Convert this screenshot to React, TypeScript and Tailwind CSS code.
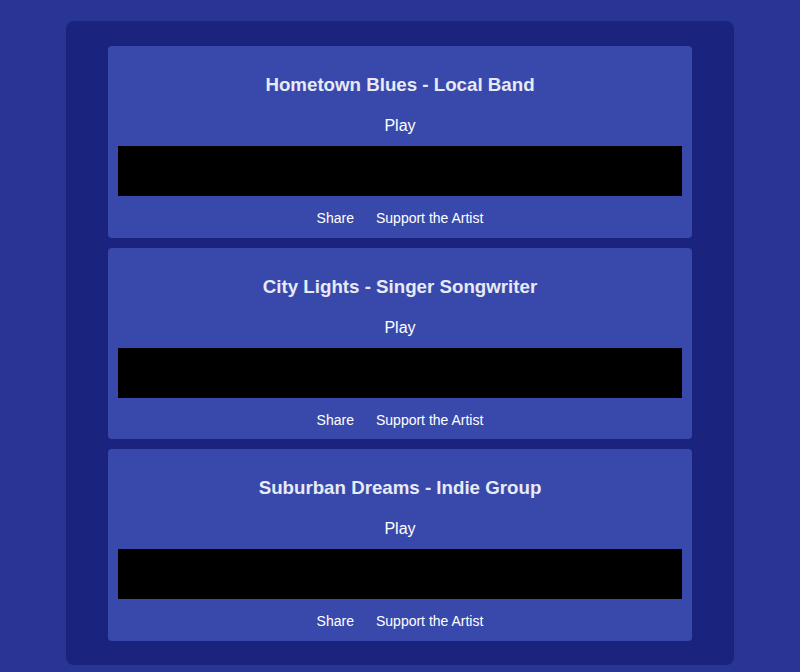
import React from "react";

const tracks = [
  "Hometown Blues - Local Band",
  "City Lights - Singer Songwriter",
  "Suburban Dreams - Indie Group",
];

export default function App() {
  return (
    <div
      className="min-h-[672px] bg-[#283593] pt-[21px] pb-[8px]"
      style={{ fontFamily: '"Liberation Sans", Arial, sans-serif' }}
    >
      <div className="mx-auto flex w-[668px] flex-col gap-[10px] rounded-lg bg-[#1a237e] px-[42px] pt-[25px] pb-[24px]">
        {tracks.map((t) => (
          <div
            key={t}
            className="flex flex-col items-center rounded bg-[#3949ab] px-[10px] pb-[11.5px] text-[#e8eaf6]"
          >
            <h2 className="mt-[27px] text-[18.72px] font-bold leading-[24px]">{t}</h2>
            <button className="mt-[19px] text-[16px] leading-[20px] text-white">Play</button>
            <div className="mt-[10px] h-[50px] w-full bg-black" />
            <div className="mt-[14px] flex gap-[22px] text-[14px] leading-[16px] text-white">
              <a href="#">Share</a>
              <a href="#">Support the Artist</a>
            </div>
          </div>
        ))}
      </div>
    </div>
  );
}
